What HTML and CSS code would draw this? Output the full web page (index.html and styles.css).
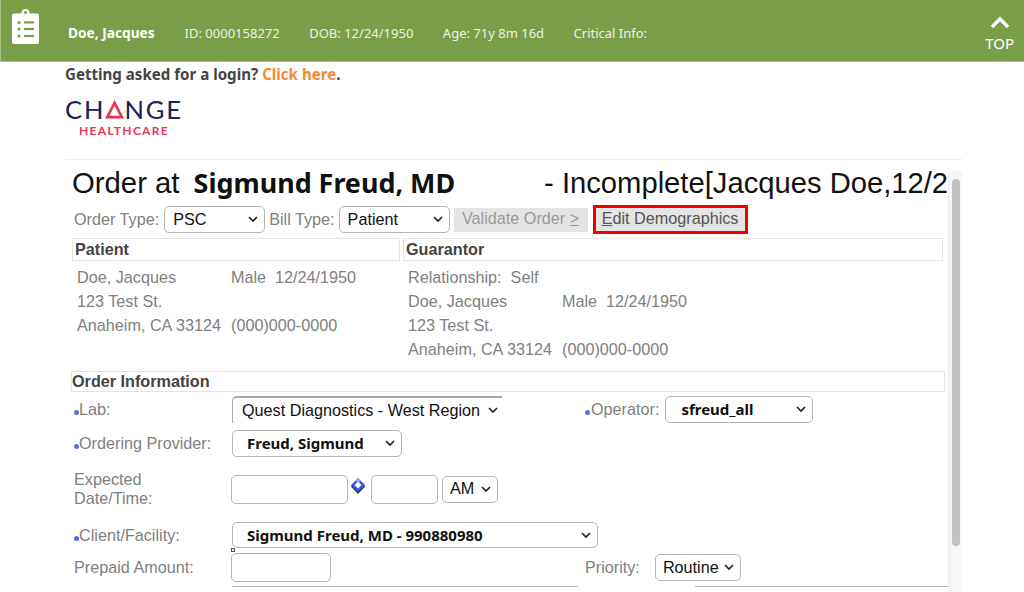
FILE: index.html
```html
<!DOCTYPE html>
<html lang="en">
<head>
  <meta charset="UTF-8">
  <title>Order</title>
  <link rel="stylesheet" href="styles.css">
</head>
<body>
  <!-- Patient banner -->
  <header class="banner">
    <svg class="banner-icon" width="27" height="35" viewBox="0 0 27 35">
      <path fill="#fff" d="M9.500 4.500V4a4 4 0 0 1 8 0v.5H25a2 2 0 0 1 2 2V33a2 2 0 0 1-2 2H2a2 2 0 0 1-2-2V6.500a2 2 0 0 1 2-2z"/>
      <circle cx="13.500" cy="3.500" r="1.500" fill="#7a9e48"/>
      <g fill="#7a9e48">
        <circle cx="7" cy="13.500" r="1.600"/><rect x="12" y="12.300" width="10" height="2.200"/>
        <circle cx="7" cy="20" r="1.600"/><rect x="12" y="18.900" width="10" height="2.200"/>
        <circle cx="7" cy="27" r="1.600"/><rect x="12" y="25.900" width="10" height="2.200"/>
      </g>
    </svg>
    <strong class="banner-name">Doe, Jacques</strong>
    <span class="banner-item">ID: 0000158272</span>
    <span class="banner-item">DOB: 12/24/1950</span>
    <span class="banner-item">Age: 71y 8m 16d</span>
    <span class="banner-item">Critical Info:</span>
    <div class="banner-top">
      <svg width="20" height="13" viewBox="0 0 20 13"><path d="M2 11 10 3l8 8" fill="none" stroke="#fff" stroke-width="3.400"/></svg>
      <span>TOP</span>
    </div>
  </header>

  <main class="page">
    <p class="notice">Getting asked for a login? <a href="#">Click here</a>.</p>

    <div class="logo">
      <div class="logo-change">CH<svg width="20" height="19" viewBox="0 0 20 19"><path d="M10 2.500 2.300 17.500h15.400z" fill="none" stroke="#e8355a" stroke-width="2.800"/></svg>NGE</div>
      <div class="logo-health">HEALTHCARE</div>
    </div>

    <div class="frame">
      <div class="frame-content">
        <h1 class="title">Order at <b class="title-name">Sigmund Freud, MD</b><span class="title-rest">- Incomplete[Jacques Doe,12/2</span></h1>

        <div class="toolbar">
          <label>Order Type:</label>
          <select class="select-type"><option>PSC</option></select>
          <label>Bill Type:</label>
          <select class="select-bill"><option>Patient</option></select>
          <button class="btn btn-disabled">Validate Order <u>&gt;</u></button>
          <button class="btn btn-edit"><u>E</u>dit Demographics</button>
        </div>

        <div class="party-heads">
          <div class="section-head head-patient">Patient</div>
          <div class="section-head head-guarantor">Guarantor</div>
        </div>

        <div class="parties">
          <div class="party party-patient">
            <span>Doe, Jacques</span><span>Male&nbsp; 12/24/1950</span>
            <span>123 Test St.</span><span></span>
            <span>Anaheim, CA 33124</span><span>(000)000-0000</span>
          </div>
          <div class="party party-guarantor">
            <span class="party-wide">Relationship:&nbsp; Self</span>
            <span>Doe, Jacques</span><span>Male&nbsp; 12/24/1950</span>
            <span>123 Test St.</span><span></span>
            <span>Anaheim, CA 33124</span><span>(000)000-0000</span>
          </div>
        </div>

        <div class="section-head head-order">Order Information</div>

        <div class="form-row row-lab">
          <div class="form-left">
            <label class="form-label"><i class="req"></i>Lab:</label>
            <select class="select-lab"><option>Quest Diagnostics - West Region</option></select>
          </div>
          <label class="side-label"><i class="req"></i>Operator:</label>
          <select class="select-bold select-operator"><option>sfreud_all</option></select>
        </div>

        <div class="form-row row-provider">
          <div class="form-left">
            <label class="form-label"><i class="req"></i>Ordering Provider:</label>
            <select class="select-bold select-provider"><option>Freud, Sigmund</option></select>
          </div>
        </div>

        <div class="form-row row-date">
          <div class="form-left">
            <label class="form-label">Expected<br>Date/Time:</label>
            <input class="input-date" type="text">
            <svg class="cal-icon" width="16" height="18" viewBox="0 0 16 18">
              <path d="M1 9.500 8 17l7-7.500L13 7H3z" fill="#2a2f55"/>
              <path d="M8 1 15 8 8 15 1 8z" fill="#3f55d8"/>
              <path d="M8 4.500 11.500 8 8 11.500 4.500 8z" fill="#fff"/>
              <path d="M5 4 8 1l3 3-3 1z" fill="#9aa6ee"/>
            </svg>
            <input class="input-time" type="text">
            <select class="select-ampm"><option>AM</option></select>
          </div>
        </div>

        <div class="form-row row-client">
          <div class="form-left">
            <label class="form-label"><i class="req"></i>Client/Facility:</label>
            <select class="select-bold select-client"><option>Sigmund Freud, MD - 990880980</option></select>
          </div>
          <i class="handle"></i>
        </div>

        <div class="form-row row-prepaid">
          <div class="form-left">
            <label class="form-label">Prepaid Amount:</label>
            <input class="input-prepaid" type="text">
          </div>
          <label class="side-label label-priority">Priority:</label>
          <select class="select-priority"><option>Routine</option></select>
        </div>

        <div class="form-row row-cut">
          <div class="cut cut-left"></div>
          <div class="cut cut-right"></div>
        </div>
      </div>

      <div class="scrollbar"><div class="scroll-thumb"></div></div>
    </div>
  </main>
</body>
</html>
```

FILE: styles.css
```css
html, body {
  height: 592px;
  margin: 0;
  overflow: hidden;
}

body {
  font-family: "Liberation Sans", Arial, sans-serif;
  font-size: 16.200px;
  background-color: #fff;
}

/* banner */
.banner {
  display: flex;
  align-items: center;
  height: 61px;
  border-bottom: 1px solid #a9c084;
  border-left: 1px solid #a9c084;
  background-color: #7a9e48;
  color: #edf2e4;
  font-family: "Noto Sans", sans-serif;
  font-size: 13px;
}

.banner-icon {
  flex: none;
  margin: 0 29px 0 11px;
  position: relative;
  top: -4px;
}

.banner-name {
  margin-right: 30px;
  color: #fff;
  font-size: 13.700px;
}

.banner-name, .banner-item {
  padding-top: 4px;
}

.banner-item {
  margin-right: 29.500px;
}

.banner-top {
  display: flex;
  flex-direction: column;
  align-items: center;
  margin-left: auto;
  margin-right: 10px;
  padding-top: 7px;
  color: #fff;
  font-size: 15px;
  line-height: 20px;
}

.banner-top svg {
  margin-bottom: 4px;
}

/* page */
.page {
  padding-left: 65px;
}

.notice {
  margin: 0;
  height: 26px;
  color: #444;
  font-family: "Noto Sans", sans-serif;
  font-size: 15.100px;
  font-weight: 700;
  line-height: 24px;
}

.notice a {
  color: #f58a33;
  text-decoration: none;
}

.logo {
  width: 116px;
  height: 71px;
  padding-top: 9px;
  box-sizing: border-box;
  text-align: center;
}

.logo-change {
  display: flex;
  align-items: center;
  justify-content: space-between;
  height: 24px;
  margin-right: -2px;
  color: #1b2059;
  font-family: "Lato", sans-serif;
  font-size: 25.500px;
  letter-spacing: 1.900px;
  line-height: 24px;
}

.logo-health {
  margin: 4px 0 0 2px;
  color: #e8355a;
  font-family: "Lato", sans-serif;
  font-size: 12px;
  font-weight: 700;
  letter-spacing: 1.300px;
  line-height: 12px;
}

/* framed order */
.frame {
  display: flex;
  width: 897px;
  height: 433px;
  border-top: 1px solid #eee;
}

.frame-content {
  flex: 1;
  min-width: 0;
  overflow: hidden;
  padding-left: 7px;
}

.scrollbar {
  flex: none;
  width: 14px;
  margin-top: 11px;
  padding: 8px 3px 0;
  box-sizing: border-box;
  background-color: #f6f6f6;
  border-left: 1px solid #eee;
}

.scroll-thumb {
  width: 8px;
  height: 367px;
  border-radius: 4px;
  background-color: #c1c1c1;
}

.title {
  margin: 6px 0 0;
  height: 39px;
  color: #111;
  font-size: 29.300px;
  font-weight: 400;
  line-height: 34px;
  white-space: nowrap;
}

.title-name {
  margin-left: 6px;
  font-family: "Noto Sans", sans-serif;
  font-size: 26.900px;
  font-weight: 700;
}

.title-rest {
  margin-left: 89px;
  font-size: 29.200px;
}

/* toolbar */
label {
  color: #808080;
  font-size: 16.200px;
}

select {
  appearance: none;
  flex: none;
  height: 27px;
  box-sizing: border-box;
  padding: 0 18px 2px 8px;
  border: 1px solid #b5b5b5;
  border-radius: 5px;
  background-color: #fff;
  background-image: url("data:image/svg+xml,%3Csvg xmlns='http://www.w3.org/2000/svg' width='10' height='7'%3E%3Cpath d='M1 1l4 4 4-4' fill='none' stroke='%23222' stroke-width='1.700'/%3E%3C/svg%3E");
  background-repeat: no-repeat;
  background-position: right 6px center;
  color: #111;
  font-family: "Liberation Sans", Arial, sans-serif;
  font-size: 16.200px;
}

input {
  flex: none;
  height: 29px;
  box-sizing: border-box;
  border: 1px solid #b5b5b5;
  border-radius: 5px;
  background-color: #fff;
}

.toolbar {
  display: flex;
  align-items: center;
  height: 29px;
  padding-left: 2px;
}

.select-type {
  width: 101px;
  margin: 0 4px 0 5px;
}

.select-bill {
  width: 111px;
  margin: 0 4px;
}

.btn {
  font-family: "Liberation Sans", Arial, sans-serif;
  font-size: 16.200px;
  border: none;
  background-color: #e4e4e4;
}

.btn-disabled {
  width: 134px;
  height: 24px;
  padding: 0 0 2px;
  color: #999;
}

.btn-edit {
  width: 155px;
  height: 29px;
  margin-left: 5px;
  padding: 0 0 2px;
  border: 3px solid #f20000;
  color: #555;
}

/* sections */
.party-heads {
  display: flex;
  margin-top: 4px;
}

.section-head {
  height: 23px;
  box-sizing: border-box;
  padding-left: 2px;
  border: 1px solid #e3e3e3;
  color: #444;
  font-weight: 700;
  line-height: 21px;
}

.head-patient {
  width: 328px;
}

.head-guarantor {
  width: 540px;
  margin-left: 3px;
}

.parties {
  display: flex;
  height: 110px;
  padding-top: 4px;
  box-sizing: border-box;
  color: #808080;
  line-height: 24px;
}

.party {
  display: grid;
  align-content: start;
}

.party-patient {
  grid-template-columns: 154px 170px;
  width: 331px;
  padding-left: 5px;
  box-sizing: border-box;
}

.party-guarantor {
  grid-template-columns: 154px 170px;
  padding-left: 5px;
}

.party-wide {
  grid-column: 1 / 3;
}

.head-order {
  width: 874px;
  height: 21px;
  margin-left: -1px;
  padding-left: 0;
  line-height: 19px;
}

/* form */
.form-row {
  display: flex;
  align-items: center;
  padding-left: 2px;
}

.form-left {
  display: flex;
  align-items: center;
  flex: none;
  width: 511px;
}

.form-label {
  flex: none;
  width: 157px;
  line-height: 19px;
}

.req {
  display: inline-block;
  width: 5px;
  height: 5px;
  border-radius: 50%;
  background-color: #5a6fdc;
}

.side-label {
  flex: none;
}

.side-label .req {
  margin-right: 1px;
}

select.select-bold {
  padding-left: 14px;
  padding-bottom: 1px;
  font-family: "Noto Sans", sans-serif;
  font-size: 15px;
  font-weight: 700;
}

.row-lab {
  height: 27px;
  margin-top: 4px;
}

.select-lab {
  width: 270px;
  margin-left: 1px;
  padding-left: 9px;
  border-width: 2px 0 0 1px;
  border-radius: 5px 0 0 0;
  border-color: #a8a8a8;
  background-position: right 4px center;
}

select.select-operator {
  width: 148px;
  margin-left: 6px;
  padding-left: 15px;
}

.row-provider {
  height: 27px;
  margin-top: 7px;
}

.select-provider {
  width: 170px;
  margin-left: 1px;
}

.row-date {
  height: 38px;
  margin-top: 13px;
}

.input-date {
  width: 117px;
}

.cal-icon {
  flex: none;
  margin: -6px 5px 0 2px;
}

.input-time {
  width: 67px;
}

.select-ampm {
  width: 56px;
  margin-left: 4px;
  padding-left: 7px;
}

.row-client {
  position: relative;
  height: 26px;
  margin-top: 14px;
}

.select-client {
  width: 366px;
  height: 26px;
  margin-left: 1px;
}

.handle {
  position: absolute;
  left: 159px;
  bottom: -4px;
  width: 2px;
  height: 2px;
  border: 1px solid #555;
  background-color: #f5f0c8;
}

.row-prepaid {
  height: 29px;
  margin-top: 5px;
}

.input-prepaid {
  width: 100px;
}

.side-label.label-priority {
  margin-right: 15px;
}

.select-priority {
  width: 86px;
  padding-left: 7px;
}

.row-cut {
  margin-top: 4px;
  padding-left: 160px;
  gap: 117px;
}

.cut {
  height: 6px;
  border-top: 1px solid #b5b5b5;
}

.cut-left {
  width: 346px;
}

.cut-right {
  width: 253px;
}
```
